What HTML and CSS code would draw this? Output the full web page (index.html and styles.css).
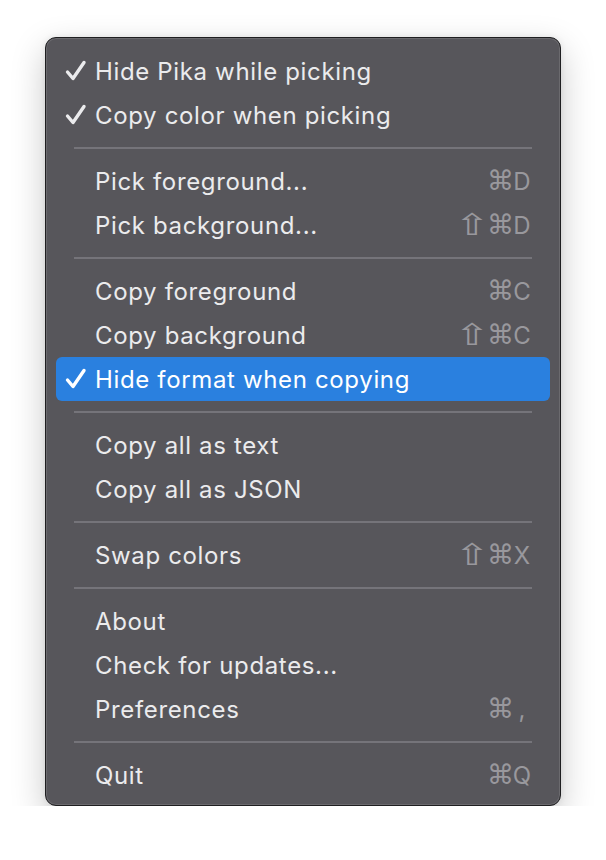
FILE: index.html
```html
<!DOCTYPE html>
<html>
<head>
<meta charset="utf-8">
<link rel="stylesheet" href="styles.css">
</head>
<body>
<div class="menu">
  <div class="item"><span class="check"><svg viewBox="0 0 24 24" width="24" height="24"><path d="M3.5 13 L9 19.5 L20 3.5" /></svg></span><span class="label">Hide Pika while picking</span></div>
  <div class="item"><span class="check"><svg viewBox="0 0 24 24" width="24" height="24"><path d="M3.5 13 L9 19.5 L20 3.5" /></svg></span><span class="label">Copy color when picking</span></div>
  <div class="sep"></div>
  <div class="item"><span class="check"></span><span class="label">Pick foreground...</span><span class="keys"><span class="cmd">⌘</span><span class="key">D</span></span></div>
  <div class="item"><span class="check"></span><span class="label">Pick background...</span><span class="keys"><span class="shift">⇧</span><span class="cmd">⌘</span><span class="key">D</span></span></div>
  <div class="sep"></div>
  <div class="item"><span class="check"></span><span class="label">Copy foreground</span><span class="keys"><span class="cmd">⌘</span><span class="key">C</span></span></div>
  <div class="item"><span class="check"></span><span class="label">Copy background</span><span class="keys"><span class="shift">⇧</span><span class="cmd">⌘</span><span class="key">C</span></span></div>
  <div class="item active"><span class="check"><svg viewBox="0 0 24 24" width="24" height="24"><path d="M3.5 13 L9 19.5 L20 3.5" /></svg></span><span class="label">Hide format when copying</span></div>
  <div class="sep"></div>
  <div class="item"><span class="check"></span><span class="label">Copy all as text</span></div>
  <div class="item"><span class="check"></span><span class="label">Copy all as JSON</span></div>
  <div class="sep"></div>
  <div class="item"><span class="check"></span><span class="label">Swap colors</span><span class="keys"><span class="shift">⇧</span><span class="cmd">⌘</span><span class="key">X</span></span></div>
  <div class="sep"></div>
  <div class="item"><span class="check"></span><span class="label">About</span></div>
  <div class="item"><span class="check"></span><span class="label">Check for updates...</span></div>
  <div class="item"><span class="check"></span><span class="label">Preferences</span><span class="keys"><span class="cmd">⌘</span><span class="key">,</span></span></div>
  <div class="sep"></div>
  <div class="item"><span class="check"></span><span class="label">Quit</span><span class="keys"><span class="cmd">⌘</span><span class="key">Q</span></span></div>
</div>
</body>
</html>
```
FILE: styles.css
```css
html, body {
  margin: 0;
  padding: 0;
  background: #ffffff;
}
body {
  padding: 37px 0 0 45px;
  font-family: "Inter", "Liberation Sans", sans-serif;
}
.menu {
  width: 514px;
  box-sizing: content-box;
  background: #57565b;
  border: 1px solid #1f1f21;
  border-radius: 11px;
  padding: 11px 0 8px;
  box-shadow: inset 0 0 0 1px rgba(255,255,255,0.12), 0 12px 34px rgba(0,0,0,0.22), 0 0 6px rgba(0,0,0,0.08);
}
.item {
  display: flex;
  align-items: center;
  height: 44px;
  margin: 0 10px;
  padding: 0 18px 0 0;
  border-radius: 6px;
  color: #ebebed;
  font-size: 24px;
  font-weight: 430;
  letter-spacing: 0.65px;
}
.item.active {
  background: #2a80df;
  color: #ffffff;
}
.check {
  width: 39px;
  flex: none;
  display: flex;
  align-items: center;
  padding-left: 8px;
  box-sizing: border-box;
}
.check svg {
  display: block;
}
.check path {
  fill: none;
  stroke: currentColor;
  stroke-width: 3.4;
  stroke-linecap: round;
  stroke-linejoin: round;
}
.label {
  flex: 1;
  white-space: nowrap;
}
.keys {
  display: flex;
  align-items: center;
  height: 44px;
  color: #99989d;
  letter-spacing: 0;
}
.cmd, .shift {
  font-family: "DejaVu Sans", sans-serif;
  font-weight: 400;
  line-height: 44px;
  display: block;
}
.cmd {
  font-size: 27px;
  width: 22px;
  text-align: center;
}
.shift {
  font-size: 30px;
  width: 12px;
  display: flex;
  justify-content: center;
  margin-right: 9px;
  transform: scaleX(1.4);
}
.key {
  width: 20px;
  text-align: center;
  margin-left: 3px;
}
.sep {
  height: 2px;
  margin: 10px 28px 10px 28px;
  background: #75747a;
}
```
